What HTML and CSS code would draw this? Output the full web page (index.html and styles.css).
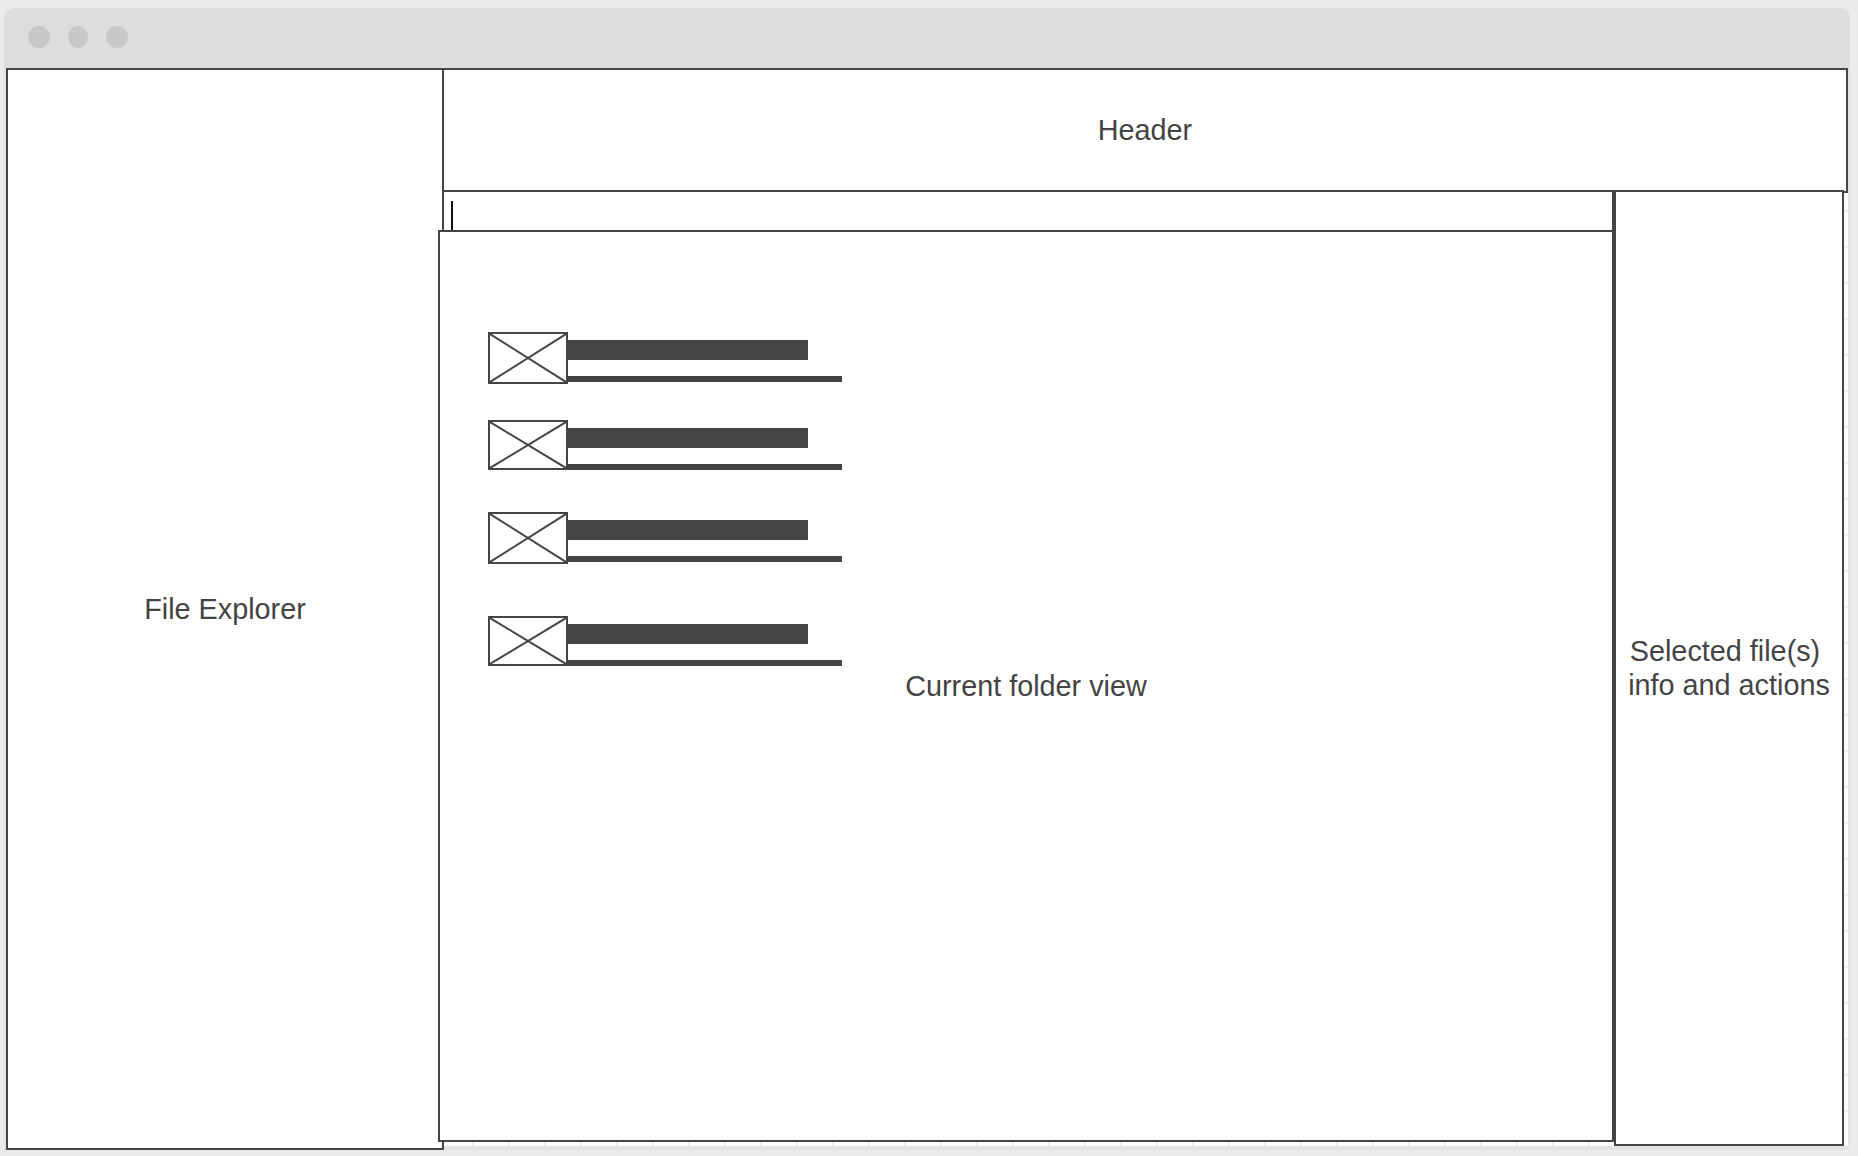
FILE: index.html
```html
<!DOCTYPE html>
<html lang="en">
<head>
    <meta charset="UTF-8">
    <meta name="viewport" content="width=device-width, initial-scale=1.0">
    <title>File Manager Wireframe</title>
    <link rel="stylesheet" href="styles.css">
</head>
<body>

    <div class="window">
        <div class="titlebar">
            <span class="dot"></span>
            <span class="dot"></span>
            <span class="dot"></span>
        </div>

        <div class="canvas">
            <div class="explorer box">File Explorer</div>

            <div class="main">
                <div class="header box">Header</div>

                <div class="content">
                    <div class="folder-column">
                        <div class="strip"><div class="caret"></div></div>

                        <div class="folder">
                            <div class="file-list">
                                <div class="file-row">
                                    <svg class="thumb" viewBox="0 0 80 52" preserveAspectRatio="none">
                                        <path d="M0 0L80 52M80 0L0 52"></path>
                                    </svg>
                                    <div class="file-bars">
                                        <div class="bar-name"></div>
                                        <div class="bar-meta"></div>
                                    </div>
                                </div>
                                <div class="file-row">
                                    <svg class="thumb" viewBox="0 0 80 50" preserveAspectRatio="none">
                                        <path d="M0 0L80 50M80 0L0 50"></path>
                                    </svg>
                                    <div class="file-bars">
                                        <div class="bar-name"></div>
                                        <div class="bar-meta"></div>
                                    </div>
                                </div>
                                <div class="file-row">
                                    <svg class="thumb" viewBox="0 0 80 52" preserveAspectRatio="none">
                                        <path d="M0 0L80 52M80 0L0 52"></path>
                                    </svg>
                                    <div class="file-bars">
                                        <div class="bar-name"></div>
                                        <div class="bar-meta"></div>
                                    </div>
                                </div>
                                <div class="file-row">
                                    <svg class="thumb" viewBox="0 0 80 50" preserveAspectRatio="none">
                                        <path d="M0 0L80 50M80 0L0 50"></path>
                                    </svg>
                                    <div class="file-bars">
                                        <div class="bar-name"></div>
                                        <div class="bar-meta"></div>
                                    </div>
                                </div>
                            </div>
                            <div class="folder-label">Current folder view</div>
                        </div>
                    </div>

                    <div class="info box">Selected file(s)&nbsp;<br>info and actions</div>
                </div>
            </div>
        </div>
    </div>

</body>
</html>
```

FILE: styles.css
```css
* {
    box-sizing: border-box;
}
body {
    margin: 0;
    height: 1156px;
    overflow: hidden;
    background-color: #ebebeb;
    font-family: "Liberation Sans", Arial, sans-serif;
    font-size: 28.8px;
    line-height: 34.5px;
    color: #444444;
}
.window {
    margin: 8px 8px 0 4px;
}
.titlebar {
    display: flex;
    align-items: center;
    gap: 18px;
    height: 60px;
    padding: 0 0 2px 24px;
    background-color: #dddddd;
    border-radius: 10px 10px 0 0;
}
.dot {
    width: 22px;
    height: 22px;
    border-radius: 50%;
    background-color: #c8c8c8;
}
.dot:nth-child(2) {
    width: 20px;
}
/* Faint grid shows through in the slivers between the boxes */
.canvas {
    display: flex;
    align-items: flex-start;
    height: 1082px;
    background-color: #ffffff;
    background-image:
        linear-gradient(to right, transparent 34px, #eeeeee 34px),
        linear-gradient(to bottom, transparent 34px, #eeeeee 34px);
    background-size: 36px 36px;
    border: solid #e3e3e3;
    border-width: 0 2px 4px 2px;
}
.box {
    display: flex;
    align-items: center;
    justify-content: center;
    text-align: center;
    background-color: #ffffff;
    border: 2px solid #444444;
}
.explorer {
    flex: none;
    width: 438px;
    height: 1082px;
}
.main {
    flex: none;
    width: 1406px;
    margin-left: -2px;
}
.header {
    height: 125px;
}
.content {
    display: flex;
    align-items: flex-start;
    margin-top: -3px;
}
.folder-column {
    flex: none;
    width: 1172px;
}
.strip {
    height: 40px;
    padding: 9px 0 0 7px;
    background-color: #ffffff;
    border: solid #444444;
    border-width: 2px 2px 0 2px;
}
.caret {
    width: 2px;
    height: 29px;
    background-color: #111111;
}
.folder {
    display: grid;
    width: 1176px;
    height: 912px;
    margin-left: -4px;
    background-color: #ffffff;
    border: 2px solid #444444;
}
.file-list {
    grid-area: 1 / 1;
    padding: 100px 0 0 48px;
}
.folder-label {
    grid-area: 1 / 1;
    place-self: center;
}
.file-row {
    display: flex;
    height: 52px;
}
.file-row:nth-child(2) {
    height: 50px;
    margin-top: 36px;
}
.file-row:nth-child(3) {
    margin-top: 42px;
}
.file-row:nth-child(4) {
    height: 50px;
    margin-top: 52px;
}
.thumb {
    flex: none;
    width: 80px;
    height: 100%;
    background-color: #ffffff;
    border: 2px solid #444444;
}
.thumb path {
    fill: none;
    stroke: #444444;
    stroke-width: 2;
    vector-effect: non-scaling-stroke;
}
.file-bars {
    padding-top: 8px;
}
.bar-name {
    width: 240px;
    height: 20px;
    background-color: #444444;
}
.bar-meta {
    width: 274px;
    height: 6px;
    margin-top: 16px;
    background-color: #444444;
}
.info {
    flex: none;
    width: 230px;
    height: 956px;
}
```
